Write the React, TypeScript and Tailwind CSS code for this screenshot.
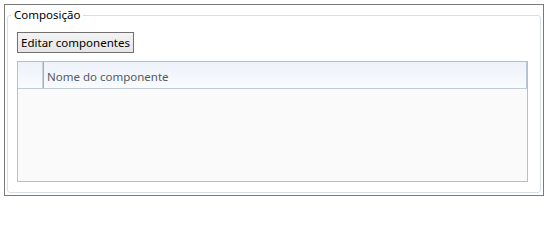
import React from 'react';

const font = { fontFamily: '"Noto Sans", "Open Sans", sans-serif' };

const ComponentGrid: React.FC = () => {
  return (
    <div className="mt-[8px] mr-[12px] h-[121px] border border-[#b5c0cc] bg-[#fafafa] flex flex-col">
      <div className="flex h-[27px] border-b border-[#c0cbd6] bg-gradient-to-b from-[#edf2fa] to-[#f9fbfd]">
        <div className="w-[25px] border-r border-[#c9d2db]" />
        <div className="w-[2px] border-l border-[#9fb1c3]" />
        <div className="flex-1 flex items-center pl-[2px] pt-[3px] text-[11.5px] text-[#555a60] border-r border-[#b9c6d3]">
          Nome do componente
        </div>
      </div>
      <div className="flex-1" />
    </div>
  );
};

export default function App() {
  return (
    <div className="w-[547px] h-[200px] bg-white pt-[4px] pl-[4px]" style={font}>
      <div className="w-[540px] h-[192px] border border-[#7a7a7a] flex">
        <fieldset className="m-[2px] flex-1 border border-[#d5dfe5] rounded-[3px] pl-[9px] pt-[9px]">
          <legend className="-ml-[6px] px-[3px] text-[11.5px] leading-[16px] text-black">Composição</legend>
          <button className="w-[117px] h-[21px] border border-[#707070] bg-gradient-to-b from-[#f3f3f3] to-[#e6e6e6] text-[11.5px] text-black leading-none flex items-center justify-center">
            Editar componentes
          </button>
          <ComponentGrid />
        </fieldset>
      </div>
    </div>
  );
}
